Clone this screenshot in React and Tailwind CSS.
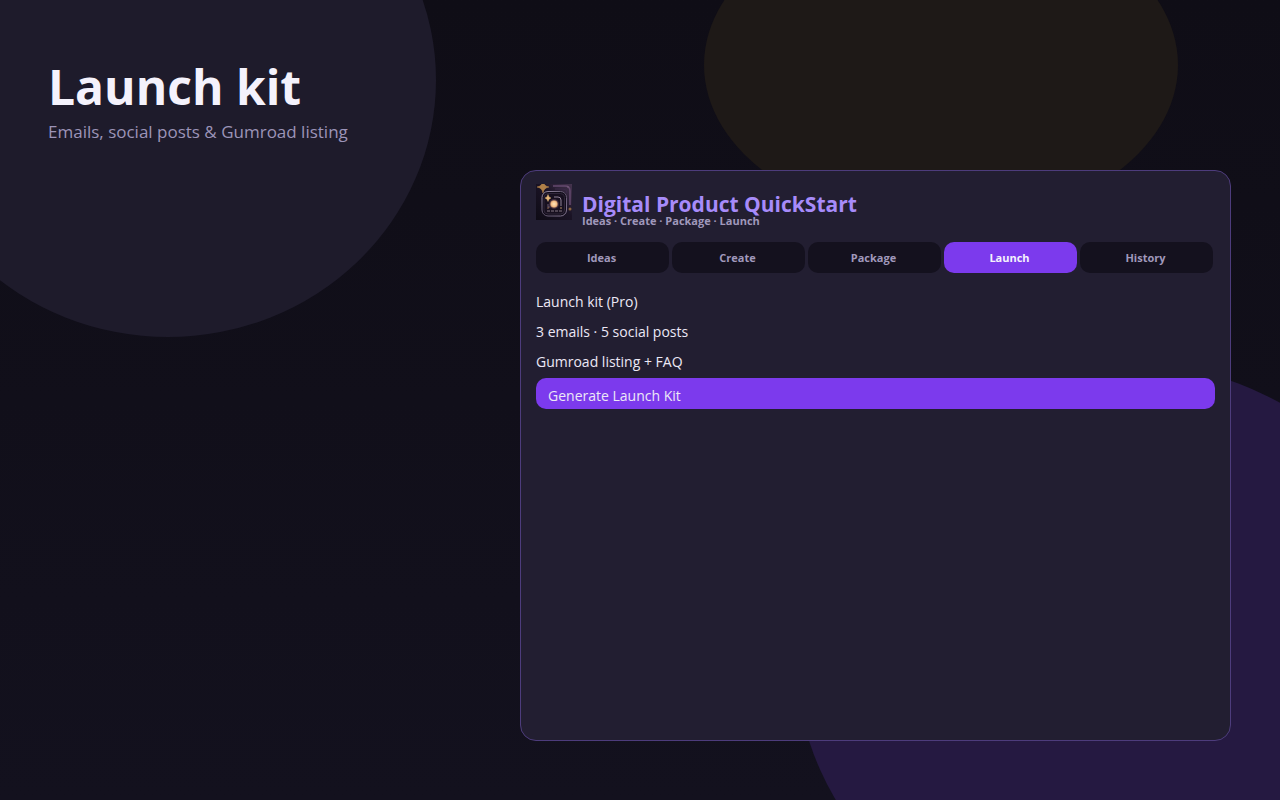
const tabs = ["Ideas", "Create", "Package", "Launch", "History"];

function Backdrop() {
  return (
    <svg
      className="absolute inset-0 -z-10 h-full w-full"
      viewBox="0 0 1280 800"
      preserveAspectRatio="none"
      aria-hidden="true"
    >
      <ellipse cx="168" cy="80" rx="268" ry="257" fill="#1e1b2b" />
      <ellipse cx="941" cy="65" rx="237" ry="160" fill="#1e1917" />
      <ellipse cx="1116" cy="657" rx="320" ry="296" fill="#251941" />
    </svg>
  );
}

function Logo() {
  return (
    <svg className="size-9 shrink-0" viewBox="0 0 36 36" aria-hidden="true">
      <defs>
        <linearGradient id="tile" x1="0" y1="1" x2="1" y2="0">
          <stop offset="0" stopColor="#0e0b15" />
          <stop offset="0.55" stopColor="#1a1325" />
          <stop offset="1" stopColor="#46344f" />
        </linearGradient>
        <linearGradient id="frame" x1="0" y1="0" x2="1" y2="1">
          <stop offset="0" stopColor="#9a8fa8" />
          <stop offset="0.5" stopColor="#5c5068" />
          <stop offset="1" stopColor="#8a7c98" />
        </linearGradient>
        <radialGradient id="orb">
          <stop offset="0" stopColor="#ffe6bc" />
          <stop offset="0.7" stopColor="#f5bf88" />
          <stop offset="1" stopColor="#b98660" />
        </radialGradient>
      </defs>
      <rect width="36" height="36" fill="url(#tile)" />
      <path d="M17 2h12q5 0 5 5v14" fill="none" stroke="#64496f" strokeWidth="1.5" />
      <path d="M19 5h8q4 0 4 4" fill="none" stroke="#3b2a49" />
      <rect x="6" y="7.500" width="24.500" height="24.500" rx="6" fill="#100c18" stroke="url(#frame)" />
      <rect x="8" y="9.500" width="20.500" height="20.500" rx="4" fill="#17101f" stroke="#2f2539" />
      <path d="M7-3Q7.800 2.200 13 3Q7.800 3.800 7 9Q6.200 3.800 1 3Q6.200 2.200 7-3z" fill="#b08048" stroke="#b08048" strokeWidth="0.500" />
      <path d="M12 10.500Q12.500 13.500 15 14Q12.500 14.500 12 17.500Q11.500 14.500 9 14Q11.500 13.500 12 10.500z" fill="#e6b878" stroke="#e6b878" strokeWidth="0.400" />
      <path d="M18 13h4q3 0 3 3v6" fill="none" stroke="#8f8096" />
      <path d="M12 20v3h2" fill="none" stroke="#6a5a70" />
      <path d="M11 27h15" stroke="#857684" strokeDasharray="3 1" />
      <circle cx="18" cy="20" r="5" fill="#6b4a5c" opacity="0.5" />
      <circle cx="18" cy="20" r="3.800" fill="url(#orb)" />
      <circle cx="25" cy="24" r="0.800" fill="#c99b6a" />
      <circle cx="12" cy="24" r="0.700" fill="#bc895e" />
      <circle cx="34" cy="25" r="1.500" fill="#8a643f" />
      <circle cx="32" cy="3" r="0.700" fill="#80677f" />
    </svg>
  );
}

export default function App() {
  return (
    <main className="relative isolate grid min-h-screen grid-cols-[472px_1fr] items-start overflow-hidden bg-linear-to-b from-[#0f0d16] to-[#13111e] pr-[49px] pb-14 pl-12 font-['Open_Sans','Noto_Sans',sans-serif]">
      <Backdrop />
      <header className="pt-[57px]">
        <h1 className="text-5xl leading-[60px] font-bold text-[#f4f2fc]">Launch kit</h1>
        <p className="mt-[3px] text-[17px] leading-6 text-[#9c94b8]">
          Emails, social posts &amp; Gumroad listing
        </p>
      </header>

      <section className="mt-[170px] min-h-[571px] rounded-2xl border border-[#4d3c7c] bg-[#221e31] px-[15px] py-[13px]">
        <div className="flex gap-[10px]">
          <Logo />
          <div className="pt-2">
            <h2 className="text-[21px] leading-6 font-bold text-[#a78bfa]">Digital Product QuickStart</h2>
            <p className="text-[11px] leading-[10px] font-bold text-[#a098bb]">
              Ideas · Create · Package · Launch
            </p>
          </div>
        </div>

        <nav className="mt-4 grid grid-cols-5 gap-[3px] pr-[2px]">
          {tabs.map((tab) => (
            <button
              key={tab}
              type="button"
              className={
                tab === "Launch"
                  ? "h-[31px] rounded-[10px] bg-[#7c3aed] pt-px pr-[2px] text-[11px] font-bold text-[#f4f2fc]"
                  : "h-[31px] rounded-[10px] bg-[#14111e] pt-px pr-[2px] text-[11px] font-bold text-[#a098bb]"
              }
            >
              {tab}
            </button>
          ))}
        </nav>

        <div className="mt-[14px] text-sm leading-[30px] text-[#ece8f6]">
          <p>Launch kit (Pro)</p>
          <p>3 emails · 5 social posts</p>
          <p>Gumroad listing + FAQ</p>
        </div>
        <button
          type="button"
          className="mt-px block h-[31px] w-full rounded-[10px] bg-[#7c3aed] px-3 pt-1 text-left text-sm text-[#ece8f6]"
        >
          Generate Launch Kit
        </button>
      </section>
    </main>
  );
}
